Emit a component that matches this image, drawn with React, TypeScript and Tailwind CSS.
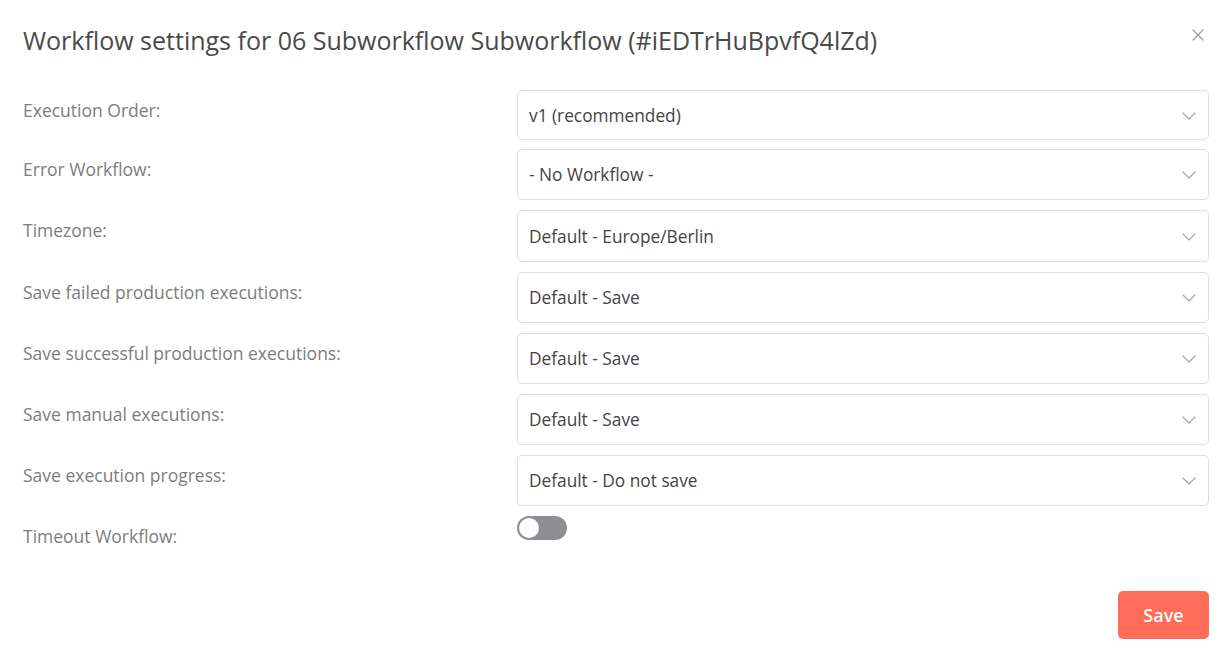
import React, { useState } from 'react';

const rows: { label: string; value: string; h: string; mb: string }[] = [
  { label: 'Execution Order:', value: 'v1 (recommended)', h: 'h-[50px]', mb: 'mb-[9px]' },
  { label: 'Error Workflow:', value: '- No Workflow -', h: 'h-[51px]', mb: 'mb-[10px]' },
  { label: 'Timezone:', value: 'Default - Europe/Berlin', h: 'h-[52px]', mb: 'mb-[10px]' },
  { label: 'Save failed production executions:', value: 'Default - Save', h: 'h-[51px]', mb: 'mb-[10px]' },
  { label: 'Save successful production executions:', value: 'Default - Save', h: 'h-[51px]', mb: 'mb-[10px]' },
  { label: 'Save manual executions:', value: 'Default - Save', h: 'h-[51px]', mb: 'mb-[10px]' },
  { label: 'Save execution progress:', value: 'Default - Do not save', h: 'h-[51px]', mb: 'mb-[10px]' },
];

function Chevron() {
  return (
    <svg width="14" height="8" viewBox="0 0 14 8" fill="none" className="shrink-0">
      <path d="M1 1l6 6 6-6" stroke="#a3a6ad" strokeWidth="1.2" strokeLinecap="round" strokeLinejoin="round" />
    </svg>
  );
}

function Select({ value, h }: { value: string; h: string }) {
  return (
    <div
      className={`flex items-center justify-between rounded-[5px] border border-[#dcdfe6] bg-white pl-[11px] pr-[12px] pt-[1px] text-[17.3px] text-[#444] ${h}`}
    >
      <span>{value}</span>
      <Chevron />
    </div>
  );
}

export default function App() {
  const [timeout, setTimeoutOn] = useState(false);

  return (
    <div
      className="relative h-[659px] w-[1227px] bg-white pl-[23px] pr-[18px]"
      style={{ fontFamily: '"Open Sans", "Noto Sans", sans-serif' }}
    >
      {/* Header */}
      <div className="flex items-start justify-between pt-[24px]">
        <h1 className="text-[25px] leading-[32px] text-[#4a4a4a]">
          Workflow settings for 06 Subworkflow Subworkflow (#iEDTrHuBpvfQ4lZd)
        </h1>
        <button className="mr-[4px] mt-[4px] text-[#9a9a9a]">
          <svg width="14" height="14" viewBox="0 0 14 14" fill="none">
            <path d="M2 2l10 10M12 2L2 12" stroke="currentColor" strokeWidth="1.3" strokeLinecap="round" />
          </svg>
        </button>
      </div>

      {/* Form */}
      <div className="mt-[34px] flex flex-col">
        {rows.map((r, i) => (
          <div key={i} className={`grid grid-cols-[494px_1fr] ${r.mb}`}>
            <div className="pt-[8px] text-[17.5px] leading-[24px] text-[#7d7d7d]">{r.label}</div>
            <Select value={r.value} h={r.h} />
          </div>
        ))}
        <div className="grid grid-cols-[494px_1fr]">
          <div className="pt-[8px] text-[17.5px] leading-[24px] text-[#7d7d7d]">Timeout Workflow:</div>
          <div>
            <button
              onClick={() => setTimeoutOn(!timeout)}
              className={`relative h-[24px] w-[50px] rounded-full ${timeout ? 'bg-[#ff6d5a]' : 'bg-[#8e8e93]'}`}
            >
              <span
                className={`absolute top-[2px] h-[20px] w-[20px] rounded-full bg-white ${timeout ? 'left-[28px]' : 'left-[2px]'}`}
              />
            </button>
          </div>
        </div>
      </div>

      {/* Footer */}
      <div className="mt-[43px] flex justify-end">
        <button className="h-[48px] w-[91px] rounded-[5px] bg-[#ff6d5a] text-[18px] font-semibold text-white">
          Save
        </button>
      </div>
    </div>
  );
}
